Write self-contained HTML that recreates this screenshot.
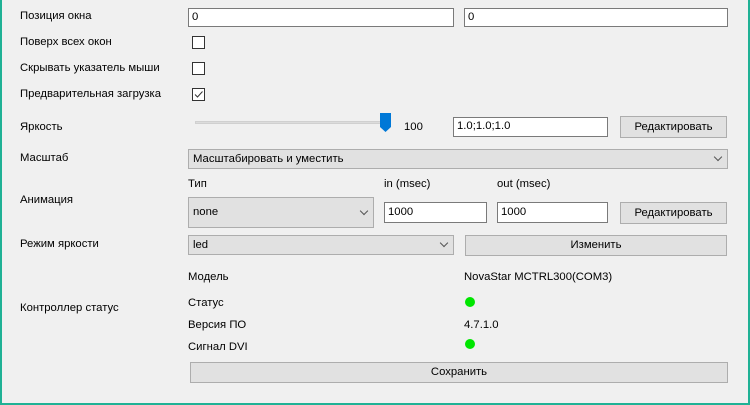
<!DOCTYPE html>
<html><head><meta charset="utf-8"><style>
*{box-sizing:border-box;margin:0;padding:0}
body{width:750px;height:405px;background:#f0f0f0;font-family:"Liberation Sans",sans-serif;font-size:11.3px;color:#000;position:relative;overflow:hidden}
.frame{position:absolute;left:0;top:0;width:750px;height:405px;border-left:2px solid #1fb195;border-right:2px solid #1fb195;border-bottom:2px solid #1fb195}
.a{position:absolute;white-space:nowrap;line-height:14px}
.in{position:absolute;background:#fff;border:1px solid #7a7a7a;padding-left:3px;line-height:17px}
.btn{position:absolute;background:#e1e1e1;border:1px solid #adadad;text-align:center}
.cb{position:absolute;background:#e1e1e1;border:1px solid #adadad;padding-left:4px}
.cbx{position:absolute;width:13px;height:13px;border:1px solid #333;background:#fff}
.chev{position:absolute;right:6px;width:6px;height:6px;border-right:1px solid #555;border-bottom:1px solid #555;transform:rotate(45deg)}
.dot{position:absolute;width:10px;height:10px;border-radius:50%;background:#00e600}
</style></head><body>
<div class="frame"></div>
<div class="a" style="left:20px;top:9px">Позиция окна</div>
<div class="in" style="left:188px;top:8px;width:266px;height:19px">0</div>
<div class="in" style="left:464px;top:8px;width:264px;height:19px">0</div>
<div class="a" style="left:20px;top:35px">Поверх всех окон</div>
<div class="cbx" style="left:192px;top:36px"></div>
<div class="a" style="left:20px;top:61px">Скрывать указатель мыши</div>
<div class="cbx" style="left:192px;top:62px"></div>
<div class="a" style="left:20px;top:87px">Предварительная загрузка</div>
<div class="cbx" style="left:192px;top:88px"><svg width="11" height="11" style="position:absolute;left:0;top:0"><path d="M2 5.5 L4.5 8 L9.5 2.5" fill="none" stroke="#333" stroke-width="1"/></svg></div>
<div class="a" style="left:20px;top:120px">Яркость</div>
<div style="position:absolute;left:195px;top:121px;width:192px;height:3px;background:#dcdcdc;border:1px solid #d0d0d0"></div>
<svg style="position:absolute;left:380px;top:113px" width="11" height="20"><path d="M0 0H11V14L5.5 19L0 14Z" fill="#0078d7"/></svg>
<div class="a" style="left:404px;top:120px">100</div>
<div class="in" style="left:453px;top:117px;width:155px;height:20px">1.0;1.0;1.0</div>
<div class="btn" style="left:620px;top:116px;width:107px;height:22px;line-height:20px">Редактировать</div>
<div class="a" style="left:20px;top:151px">Масштаб</div>
<div class="cb" style="left:188px;top:149px;width:540px;height:20px;line-height:18px">Масштабировать и уместить<div class="chev" style="top:4px"></div></div>
<div class="a" style="left:188px;top:177px">Тип</div>
<div class="a" style="left:384px;top:177px">in (msec)</div>
<div class="a" style="left:497px;top:177px">out (msec)</div>
<div class="a" style="left:20px;top:193px">Анимация</div>
<div class="cb" style="left:188px;top:197px;width:186px;height:31px;line-height:29px">none<div class="chev" style="top:10px"></div></div>
<div class="in" style="left:384px;top:202px;width:103px;height:21px;line-height:19px">1000</div>
<div class="in" style="left:497px;top:202px;width:111px;height:21px;line-height:19px">1000</div>
<div class="btn" style="left:620px;top:202px;width:107px;height:22px;line-height:20px">Редактировать</div>
<div class="a" style="left:20px;top:237px">Режим яркости</div>
<div class="cb" style="left:188px;top:235px;width:266px;height:20px;line-height:18px">led<div class="chev" style="top:4px"></div></div>
<div class="btn" style="left:465px;top:235px;width:262px;height:21px;line-height:19px">Изменить</div>
<div class="a" style="left:188px;top:270px">Модель</div>
<div class="a" style="left:464px;top:270px">NovaStar MCTRL300(COM3)</div>
<div class="a" style="left:20px;top:301px">Контроллер статус</div>
<div class="a" style="left:188px;top:296px">Статус</div>
<div class="dot" style="left:465px;top:297px"></div>
<div class="a" style="left:188px;top:318px">Версия ПО</div>
<div class="a" style="left:464px;top:318px">4.7.1.0</div>
<div class="a" style="left:188px;top:340px">Сигнал DVI</div>
<div class="dot" style="left:465px;top:339px"></div>
<div class="btn" style="left:190px;top:362px;width:538px;height:21px;line-height:19px">Сохранить</div>
</body></html>
